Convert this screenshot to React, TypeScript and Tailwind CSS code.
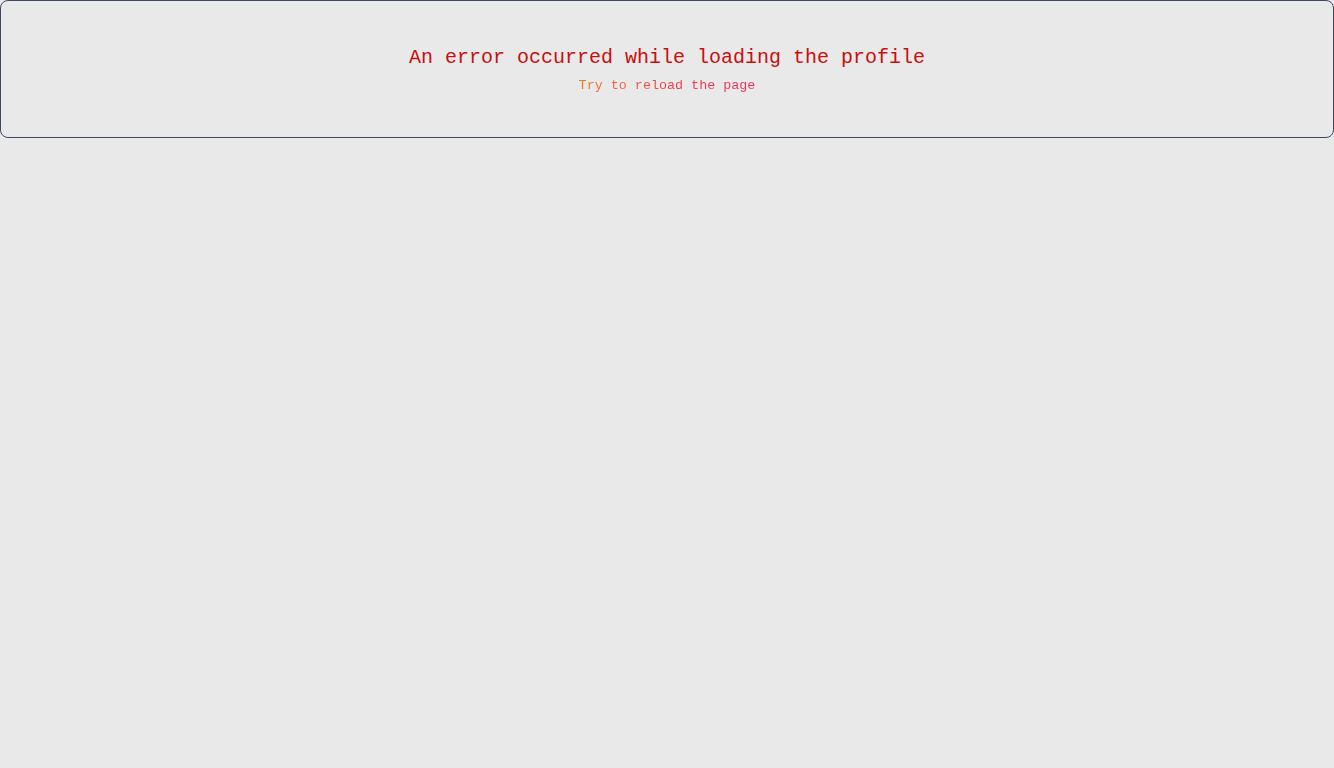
import React from "react";

const ProfileError = () => {
  return (
    <div className="w-full rounded-lg border border-[#3d4766] bg-[#e9e9e9] h-[138px] pt-[3px] flex flex-col items-center justify-center">
      <h1 className="text-[20px] leading-[24px] text-[#c8100e]">
        An error occurred while loading the profile
      </h1>
      <p className="text-[13.4px] leading-[18px] mt-[7px] bg-gradient-to-r from-[#f07a20] via-[#f03a4a] to-[#f0305a] bg-clip-text text-transparent">
        Try to reload the page
      </p>
    </div>
  );
};

export default function App() {
  return (
    <div
      className="min-h-screen w-full bg-[#e9e9e9]"
      style={{ fontFamily: '"Liberation Mono", "DejaVu Sans Mono", monospace' }}
    >
      <ProfileError />
    </div>
  );
}
